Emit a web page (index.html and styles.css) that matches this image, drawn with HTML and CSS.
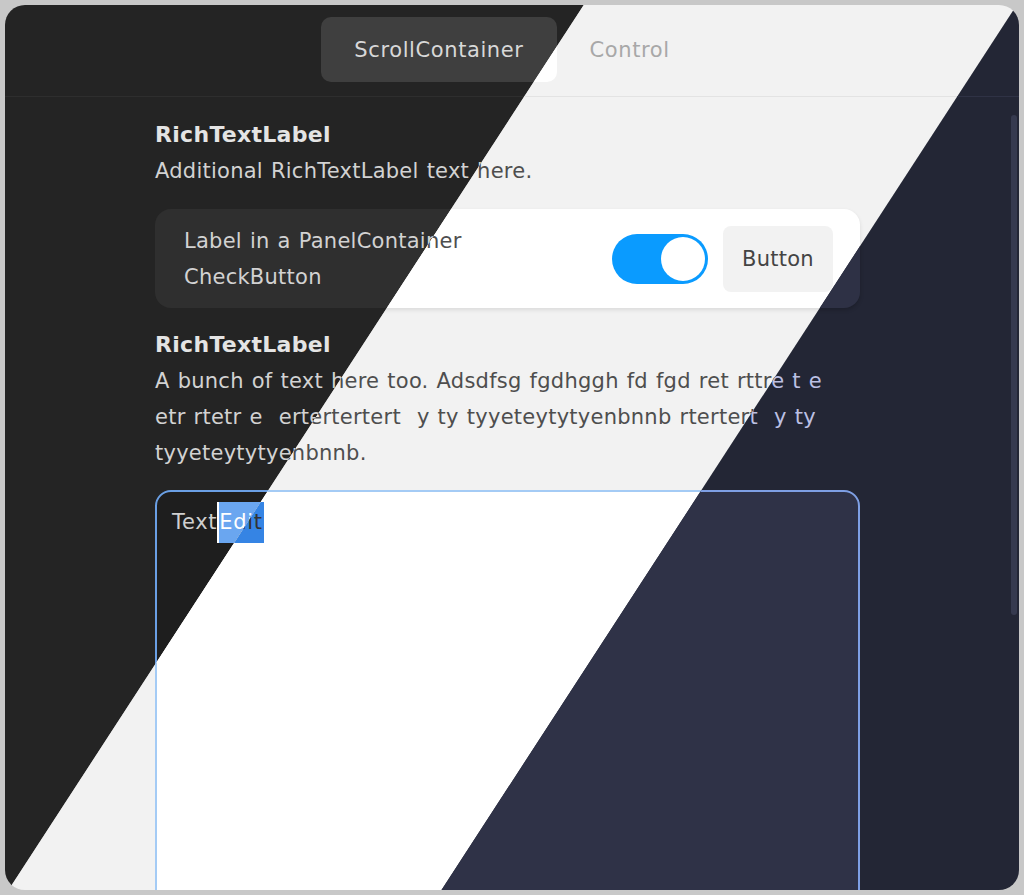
FILE: index.html
```html
<!DOCTYPE html>
<html>
<head>
<meta charset="utf-8">
<link rel="stylesheet" href="styles.css">
</head>
<body>
<div class="frame">
  <div class="window">
    <div class="theme dark">
      <div class="tabbar"><div class="tab selected">ScrollContainer</div><div class="tab">Control</div></div>
      <div class="content">
        <div class="heading">RichTextLabel</div>
        <div class="para">Additional RichTextLabel text here.</div>
        <div class="panel">
          <div class="labels"><div>Label in a PanelContainer</div><div>CheckButton</div></div>
          <div class="toggle"><div class="knob"></div></div>
          <div class="button">Button</div>
        </div>
        <div class="heading second">RichTextLabel</div>
        <div class="para wrap">A bunch of text here too. Adsdfsg fgdhggh fd fgd ret rttre t e<br>etr rtetr e  ertertertert  y ty tyyeteytytyenbnnb rtertert  y ty<br>tyyeteytytyenbnnb.</div>
        <div class="textedit"><div class="line">Text<span class="sel">Edit</span></div></div>
      </div>
      <div class="scrollbar"></div>
    </div>
    <div class="theme light">
      <div class="tabbar"><div class="tab selected">ScrollContainer</div><div class="tab">Control</div></div>
      <div class="content">
        <div class="heading">RichTextLabel</div>
        <div class="para">Additional RichTextLabel text here.</div>
        <div class="panel">
          <div class="labels"><div>Label in a PanelContainer</div><div>CheckButton</div></div>
          <div class="toggle"><div class="knob"></div></div>
          <div class="button">Button</div>
        </div>
        <div class="heading second">RichTextLabel</div>
        <div class="para wrap">A bunch of text here too. Adsdfsg fgdhggh fd fgd ret rttre t e<br>etr rtetr e  ertertertert  y ty tyyeteytytyenbnnb rtertert  y ty<br>tyyeteytytyenbnnb.</div>
        <div class="textedit"><div class="line">Text<span class="sel">Edit</span></div></div>
      </div>
      <div class="scrollbar"></div>
    </div>
    <div class="theme blue">
      <div class="tabbar"><div class="tab selected">ScrollContainer</div><div class="tab">Control</div></div>
      <div class="content">
        <div class="heading">RichTextLabel</div>
        <div class="para">Additional RichTextLabel text here.</div>
        <div class="panel">
          <div class="labels"><div>Label in a PanelContainer</div><div>CheckButton</div></div>
          <div class="toggle"><div class="knob"></div></div>
          <div class="button">Button</div>
        </div>
        <div class="heading second">RichTextLabel</div>
        <div class="para wrap">A bunch of text here too. Adsdfsg fgdhggh fd fgd ret rttre t e<br>etr rtetr e  ertertertert  y ty tyyeteytytyenbnnb rtertert  y ty<br>tyyeteytytyenbnnb.</div>
        <div class="textedit"><div class="line">Text<span class="sel">Edit</span></div></div>
      </div>
      <div class="scrollbar"></div>
    </div>
  </div>
</div>
</body>
</html>
```

FILE: styles.css
```css
html, body {
  margin: 0;
  padding: 0;
  background: #c8c8c8;
}
.frame {
  width: 1024px;
  height: 895px;
  padding: 5px;
  box-sizing: border-box;
  background: #c8c8c8;
}
.window {
  position: relative;
  width: 1014px;
  height: 885px;
  border-radius: 20px;
  overflow: hidden;
  font-family: "DejaVu Sans", "Noto Sans", sans-serif;
  font-size: 21px;
  letter-spacing: 0.25px;
  word-spacing: 1.1px;
}
.theme {
  position: absolute;
  inset: 0;
  overflow: hidden;
}
.dark {
  background: #242424;
  color: #d2d2d2;
  clip-path: polygon(0 0, 578.75px 0, 3.5px 885px, 0 885px);
}
.light {
  background: #f2f2f2;
  color: #4e4e4e;
  clip-path: polygon(578.75px 0, 1011.75px 0, 436.5px 885px, 3.5px 885px);
}
.blue {
  background: #232635;
  color: #bcc0e4;
  clip-path: polygon(1011.75px 0, 1014px 0, 1014px 885px, 436.5px 885px);
}
.tabbar {
  height: 92px;
  box-sizing: border-box;
  padding-top: 12px;
  display: flex;
  justify-content: center;
  align-items: flex-start;
  border-bottom: 1px solid #2e2e2e;
}
.tab {
  height: 65px;
  padding: 0 33px;
  display: flex;
  align-items: center;
  border-radius: 10px;
  color: #a8a8a8;
  letter-spacing: 0.6px;
}
.dark .tab.selected { background: #3f3f3f; color: #d8d8d8; }
.light .tab.selected { background: #ffffff; color: #444; }
.blue .tab.selected { background: #34384d; color: #c8ccef; }
.light .tabbar { border-bottom-color: #e3e3e3; }
.blue .tabbar { border-bottom-color: #2f3245; }
.blue .tab { color: #7f84a6; }
.content {
  width: 705px;
  margin-left: 150px;
  padding-top: 20px;
  display: flex;
  flex-direction: column;
}
.heading {
  font-weight: 700;
  font-size: 22px;
  line-height: 36px;
  letter-spacing: 0.3px;
}
.dark .heading { color: #e4e4e4; }
.light .heading { color: #333; }
.blue .heading { color: #d4d7f2; }
.para {
  line-height: 36px;
}
.wrap { white-space: pre; }
.heading.second { margin-top: 19px; }
.panel {
  margin-top: 20px;
  height: 99px;
  box-sizing: border-box;
  border-radius: 16px;
  padding: 14px 27px 13px 29px;
  display: flex;
  align-items: center;
}
.dark .panel { background: #2f2f2f; }
.light .panel { background: #ffffff; box-shadow: 0 2px 4px rgba(0,0,0,0.10); }
.blue .panel { background: #2e3145; box-shadow: 0 2px 4px rgba(0,0,0,0.2); }
.labels {
  flex: 1;
  line-height: 36px;
}
.toggle {
  width: 96px;
  height: 50px;
  box-sizing: border-box;
  border-radius: 25px;
  background: #0a9bff;
  display: flex;
  justify-content: flex-end;
  align-items: center;
  padding: 0 3px;
  margin-right: 15px;
}
.knob {
  width: 44px;
  height: 44px;
  border-radius: 50%;
  background: #ffffff;
}
.button {
  width: 110px;
  height: 66px;
  border-radius: 8px;
  display: flex;
  align-items: center;
  justify-content: center;
}
.dark .button { background: #3f3f3f; color: #dcdcdc; }
.light .button { background: #f2f2f2; color: #444; }
.blue .button { background: #3a3d55; color: #c8ccef; }
.textedit {
  margin-top: 19px;
  height: 420px;
  box-sizing: border-box;
  border: 2px solid #6a9fe4;
  border-radius: 16px;
  padding: 10px 15px;
  letter-spacing: 0.7px;
}
.dark .textedit { background: #1e1e1e; border-color: #6a9fe4; color: #cfcfcf; }
.light .textedit { background: #ffffff; border-color: #a4cbf5; color: #444; }
.blue .textedit { background: #2f3247; border-color: #7e9fe4; color: #c8ccef; }
.line {
  height: 41px;
  line-height: 41px;
  display: flex;
}
.sel {
  padding-right: 1px;
  border-left: 2px solid #ffffff;
}
.dark .sel { background: #6aa6f0; color: #ffffff; }
.light .sel { background: #3584e4; color: #333; border-left-color: #333; }
.blue .sel { background: #5b7fd8; color: #ffffff; }
.scrollbar {
  position: absolute;
  right: 2px;
  top: 110px;
  width: 6px;
  height: 500px;
  border-radius: 3px;
}
.dark .scrollbar { background: #3a3a3a; }
.light .scrollbar { background: #d4d4d4; }
.blue .scrollbar { background: #363a4f; }
```
